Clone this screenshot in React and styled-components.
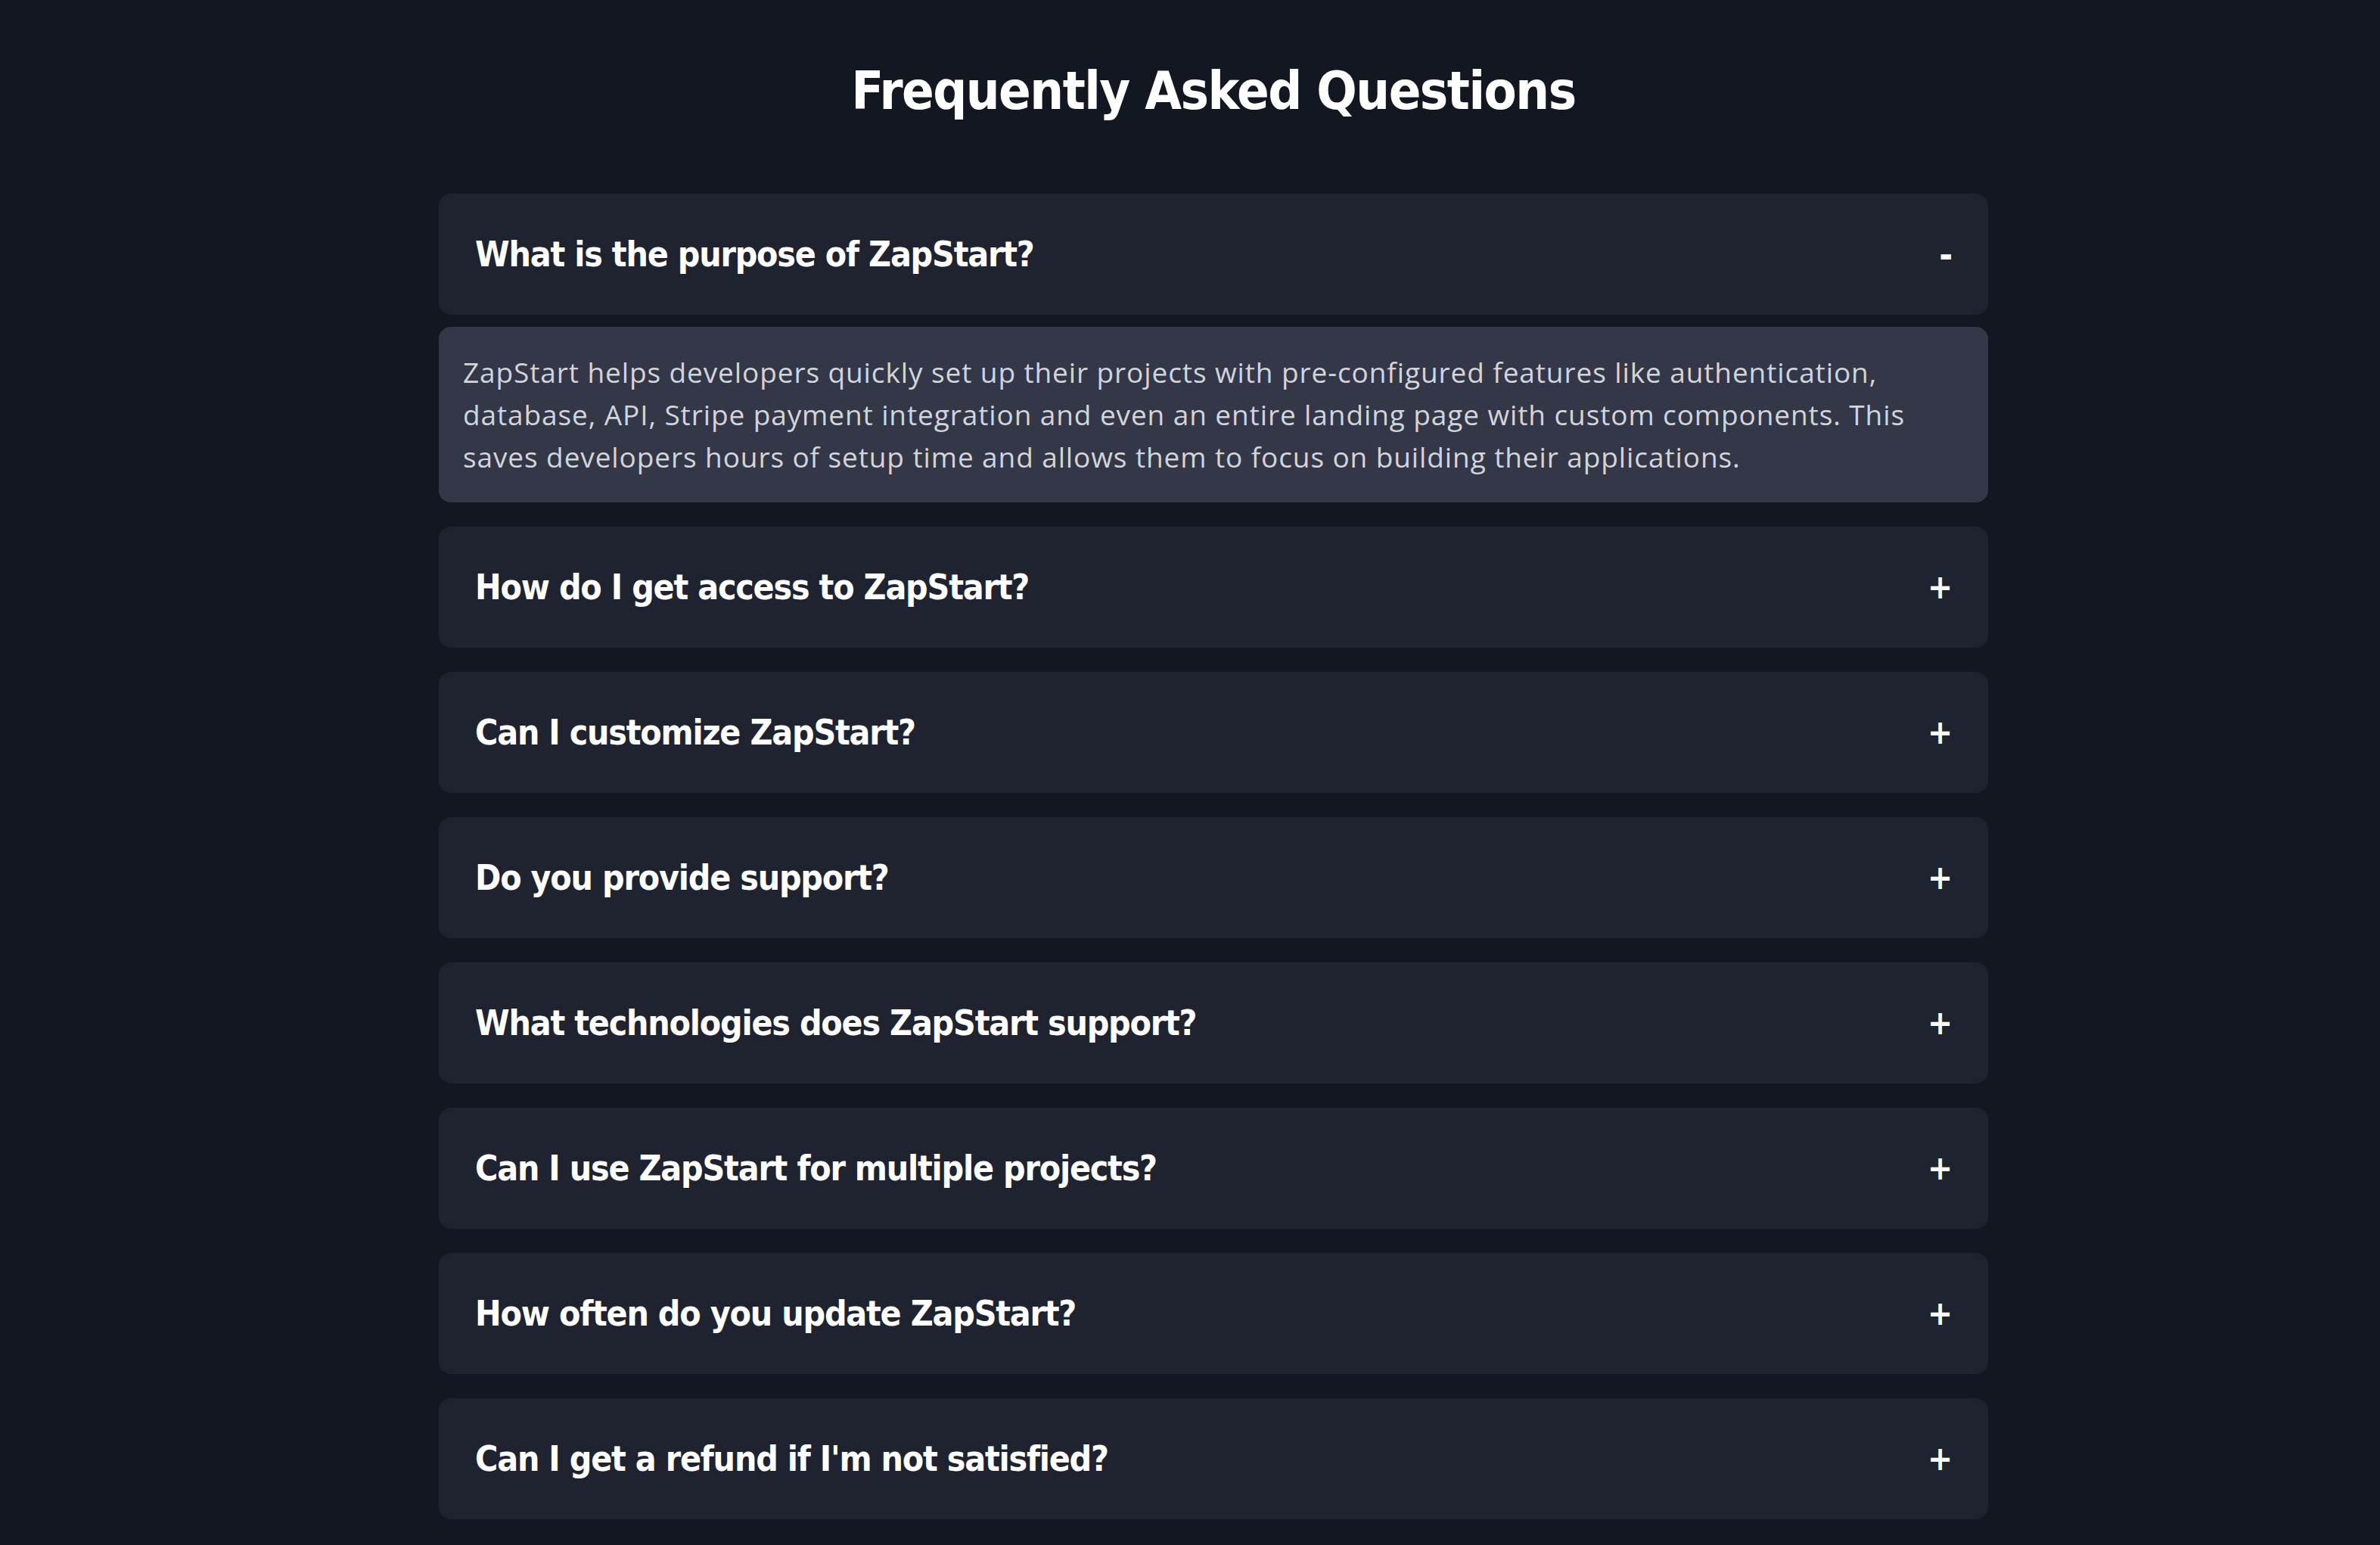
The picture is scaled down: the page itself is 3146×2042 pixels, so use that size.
import { useState } from "react";
import styled, { createGlobalStyle } from "styled-components";

const GlobalStyle = createGlobalStyle`
    body {
        margin: 0;
        background-color: #131722;
    }
`;

const Page = styled.div`
    min-height: 100vh;
    padding: 80px 0 80px 62px;
    box-sizing: border-box;
`;

const Container = styled.div`
    width: 2048px;
    margin: 0 auto;
`;

const Title = styled.h2`
    margin: 0 0 96px;
    text-align: center;
    font-family: "DejaVu Sans Condensed", sans-serif;
    font-size: 70px;
    line-height: 80px;
    letter-spacing: -1.5px;
    font-weight: 700;
    color: #fff;
`;

const List = styled.div`
    display: flex;
    flex-direction: column;
    gap: 32px;
`;

const Item = styled.div`
    display: flex;
    flex-direction: column;
    gap: 16px;
`;

const Question = styled.button`
    display: flex;
    align-items: center;
    justify-content: space-between;
    height: 160px;
    padding: 0 48px;
    border: none;
    border-radius: 16px;
    background-color: #1f2330;
    color: #fff;
    font-family: "DejaVu Sans Condensed", sans-serif;
    font-size: 46px;
    letter-spacing: -1.2px;
    font-weight: 700;
    text-align: left;
    cursor: pointer;
`;

const Toggle = styled.span`
    font-size: ${(p) => (p.open ? "48px" : "44px")};
    line-height: 1;
`;

const Answer = styled.div`
    padding: 32px;
    border-radius: 16px;
    background-color: #333747;
    color: #d1d5db;
    font-family: "Open Sans", sans-serif;
    font-size: 37px;
    letter-spacing: 0.9px;
    line-height: 56px;
`;

const faqs = [
    {
        q: "What is the purpose of ZapStart?",
        a: "ZapStart helps developers quickly set up their projects with pre-configured features like authentication, database, API, Stripe payment integration and even an entire landing page with custom components. This saves developers hours of setup time and allows them to focus on building their applications.",
    },
    { q: "How do I get access to ZapStart?", a: "" },
    { q: "Can I customize ZapStart?", a: "" },
    { q: "Do you provide support?", a: "" },
    { q: "What technologies does ZapStart support?", a: "" },
    { q: "Can I use ZapStart for multiple projects?", a: "" },
    { q: "How often do you update ZapStart?", a: "" },
    { q: "Can I get a refund if I'm not satisfied?", a: "" },
];

export default function App() {
    const [open, setOpen] = useState(0);

    return (
        <>
            <GlobalStyle />
            <Page>
                <Container>
                    <Title>Frequently Asked Questions</Title>
                    <List>
                        {faqs.map((f, i) => (
                            <Item key={f.q}>
                                <Question onClick={() => setOpen(open === i ? -1 : i)}>
                                    {f.q}
                                    <Toggle open={open === i}>{open === i ? "-" : "+"}</Toggle>
                                </Question>
                                {open === i && <Answer>{f.a}</Answer>}
                            </Item>
                        ))}
                    </List>
                </Container>
            </Page>
        </>
    );
}
